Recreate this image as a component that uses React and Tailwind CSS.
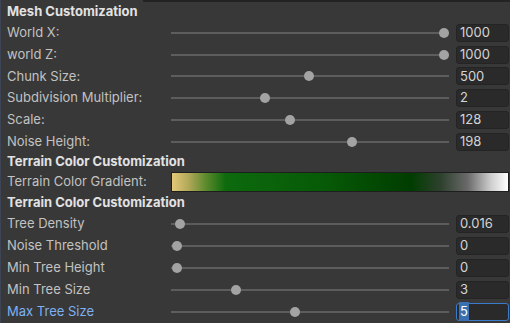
import React from 'react'

// Slider rows: thumb position is a fraction 0..1 along the track
const MESH_ROWS = [
  { label: 'World X:', value: '1000', pos: 1 },
  { label: 'world Z:', value: '1000', pos: 1 },
  { label: 'Chunk Size:', value: '500', pos: 0.494 },
  { label: 'Subdivision Multiplier:', value: '2', pos: 0.33 },
  { label: 'Scale:', value: '128', pos: 0.423 },
  { label: 'Noise Height:', value: '198', pos: 0.655 },
]

const TREE_ROWS = [
  { label: 'Tree Density', value: '0.016', pos: 0.011 },
  { label: 'Noise Threshold', value: '0', pos: 0 },
  { label: 'Min Tree Height', value: '0', pos: 0 },
  { label: 'Min Tree Size', value: '3', pos: 0.221 },
  { label: 'Max Tree Size', value: '5', pos: 0.442, focused: true },
]

function Header({ children, className }) {
  return (
    <div className={`flex items-center pl-[6px] font-bold text-[13px] text-[#e2e2e2] ${className}`}>
      {children}
    </div>
  )
}

function Slider({ pos }) {
  return (
    <div className="relative h-[12px] w-[278px]">
      <div className="absolute left-0 right-0 top-[5px] h-[2px] bg-[#5d5d5d]" />
      <div
        className="absolute top-[1px] h-[10px] w-[10px] rounded-full bg-[#a3a3a3]"
        style={{ left: `${1 + pos * 267}px` }}
      />
    </div>
  )
}

function SliderRow({ row, height }) {
  return (
    <div className={`flex items-center ${height}`}>
      <div className={`w-[170px] pl-[6px] text-[13px] ${row.focused ? 'text-[#7eb1f2]' : 'text-[#c2c2c2]'}`}>
        {row.label}
      </div>
      <Slider pos={row.pos} />
      <div
        className={`ml-[7px] flex h-[18px] w-[53px] items-center rounded-[3px] border bg-[#2a2a2a] pl-[2px] text-[13px] text-[#d4d4d4] ${
          row.focused ? 'border-[#3a7ccb]' : 'border-[#242424]'
        }`}
      >
        {row.focused ? (
          <span className="bg-[#3a6fb0] px-[1px] text-white">{row.value}</span>
        ) : (
          <span className="px-[1px]">{row.value}</span>
        )}
      </div>
    </div>
  )
}

export default function App() {
  return (
    <div
      className="h-[323px] w-[510px] overflow-hidden bg-[#383838] border-l border-[#3d4456]"
      style={{ fontFamily: 'Inter, "Noto Sans", sans-serif' }}
    >
      {/* top edge strip */}
      <div className="flex h-[2px]">
        <div className="w-[142px]" />
        <div className="flex-1 bg-[#232323]" />
      </div>

      <Header className="h-[20px]">Mesh Customization</Header>
      {MESH_ROWS.map((row) => (
        <SliderRow key={row.label} row={row} height="h-[21.75px]" />
      ))}

      <Header className="h-[18px]">Terrain Color Customization</Header>
      <div className="flex h-[23px] items-center">
        <div className="w-[170px] pl-[6px] text-[13px] text-[#c2c2c2]">Terrain Color Gradient:</div>
        <div className="h-[20px] w-[338px] border border-[#1e1e1e] bg-[linear-gradient(to_right,#e4c878_0%,#b0a858_5%,#5e8a2e_10%,#0d6a0d_16%,#075a07_45%,#003d00_71%,#2e402e_80%,#6a6a6a_88%,#cfcfcf_95%,#ffffff_100%)]" />
      </div>

      <Header className="h-[19px]">Terrain Color Customization</Header>
      {TREE_ROWS.map((row) => (
        <SliderRow key={row.label} row={row} height="h-[22px]" />
      ))}
    </div>
  )
}
